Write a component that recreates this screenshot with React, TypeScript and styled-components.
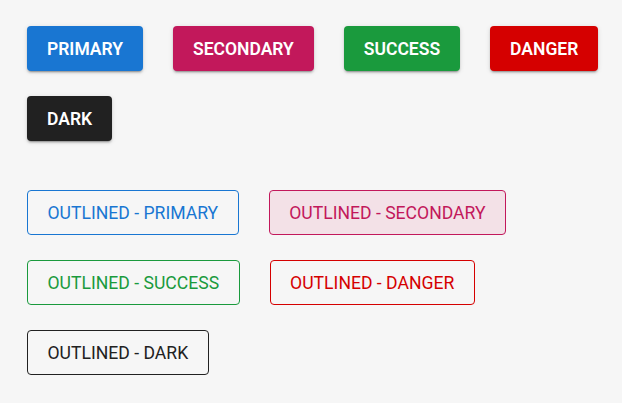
import styled, { createGlobalStyle, css } from "styled-components";

const GlobalStyle = createGlobalStyle`
  html, body {
    margin: 0;
    padding: 0;
    background: #f6f6f6;
    font-family: Roboto, "Liberation Sans", sans-serif;
  }
`;

const Page = styled.div`
  padding: 26px 18px 26px 27px;
  display: flex;
  flex-direction: column;
  gap: 49px;
`;

const Group = styled.div`
  display: flex;
  flex-wrap: wrap;
  column-gap: 30px;
  row-gap: 25px;
`;

const colors: Record<string, string> = {
  primary: "#1976d2",
  secondary: "#c2185b",
  success: "#1a9a3d",
  danger: "#d50000",
  dark: "#212121",
};

const Button = styled.button<{ $color: string; $outlined?: boolean; $tint?: boolean }>`
  height: 45px;
  padding: 0 20px;
  border-radius: 4px;
  font-family: Roboto, "Liberation Sans", sans-serif;
  font-size: 17.6px;
  text-transform: uppercase;
  cursor: pointer;
  box-sizing: border-box;
  ${(p) =>
    p.$outlined
      ? css`
          background: ${p.$tint ? "#f3e1e7" : "transparent"};
          border: 1px solid ${p.$color};
          color: ${p.$color};
          font-weight: 400;
          padding: 0 19.5px;
        `
      : css`
          background: ${p.$color};
          border: none;
          color: #fff;
          font-weight: 600;
          font-size: 17.5px;
          box-shadow: 0 3px 1px -2px rgba(0, 0, 0, 0.2), 0 2px 2px 0 rgba(0, 0, 0, 0.14),
            0 1px 5px 0 rgba(0, 0, 0, 0.12);
        `}
`;

export default function App() {
  return (
    <>
      <GlobalStyle />
      <Page>
        <Group>
          <Button $color={colors.primary}>Primary</Button>
          <Button $color={colors.secondary}>Secondary</Button>
          <Button $color={colors.success}>Success</Button>
          <Button $color={colors.danger}>Danger</Button>
          <Button $color={colors.dark}>Dark</Button>
        </Group>
        <Group>
          <Button $outlined $color={colors.primary}>Outlined - Primary</Button>
          <Button $outlined $tint $color={colors.secondary}>Outlined - Secondary</Button>
          <Button $outlined $color={colors.success}>Outlined - Success</Button>
          <Button $outlined $color={colors.danger}>Outlined - Danger</Button>
          <Button $outlined $color={colors.dark}>Outlined - Dark</Button>
        </Group>
      </Page>
    </>
  );
}
